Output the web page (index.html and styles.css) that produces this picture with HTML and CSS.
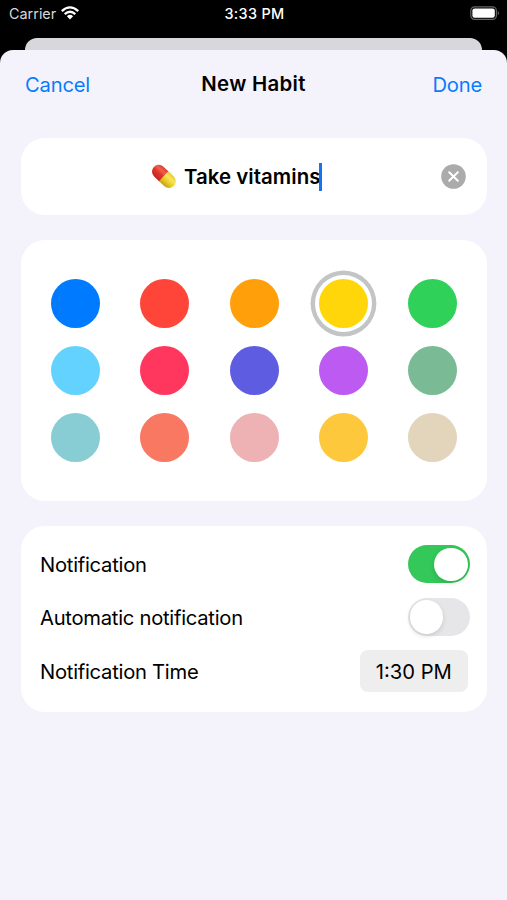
FILE: index.html
```html
<!DOCTYPE html>
<html lang="en">
<head>
<meta charset="utf-8">
<title>New Habit</title>
<link rel="stylesheet" href="styles.css">
</head>
<body>
<div class="status">
  <div class="carrier"><span class="carrier-name">Carrier</span>
    <svg class="wifi" viewBox="0 0 18 14" width="18" height="14"><g fill="none" stroke="#fff" stroke-width="2.3"><path d="M.8 5.2Q9-2.4 17.2 5.2"/><path d="M3.7 8.2Q9 3.2 14.3 8.2"/></g><path fill="#fff" d="M5.9 10.2Q9 7.4 12.1 10.2L9 13.4Z"/></svg>
  </div>
  <div class="clock">3:33 PM</div>
  <svg class="battery" viewBox="0 0 30 15" width="30" height="15"><rect x=".8" y=".8" width="25.6" height="12.6" rx="3.8" fill="none" stroke="#666" stroke-width="1.2"/><rect x="2.4" y="2.4" width="22.4" height="9.4" rx="2.2" fill="#fff"/><path d="M27.8 4.8Q30 7.1 27.8 9.4Z" fill="#777"/></svg>
</div>
<div class="backsheet"></div>
<main class="sheet">
  <header class="nav">
    <span class="action cancel">Cancel</span>
    <h1 class="title">New Habit</h1>
    <span class="action done">Done</span>
  </header>
  <section class="card name-card">
    <svg class="pill" viewBox="0 0 26 26" width="26" height="26">
      <defs>
        <linearGradient id="red" x1="0" y1="0" x2="0" y2="1"><stop offset="0" stop-color="#d8402f"/><stop offset=".3" stop-color="#f0604e"/><stop offset=".55" stop-color="#e0392b"/><stop offset="1" stop-color="#c2251d"/></linearGradient>
        <linearGradient id="yellow" x1="0" y1="0" x2="0" y2="1"><stop offset="0" stop-color="#e9c92f"/><stop offset=".3" stop-color="#f8e660"/><stop offset=".6" stop-color="#ecd029"/><stop offset="1" stop-color="#c8a01c"/></linearGradient>
      </defs>
      <g transform="rotate(43 12.9 12.4)"><path fill="url(#red)" d="M13 5.6H5.9a6.8 6.8 0 0 0 0 13.6H13Z"/><path fill="url(#yellow)" d="M12.6 5.6h7.3a6.8 6.8 0 0 1 0 13.6h-7.3Z"/></g>
    </svg>
    <span class="habit">Take vitamins</span><span class="caret"></span>
    <svg class="clear" viewBox="0 0 25 25" width="25" height="25"><circle cx="12.5" cy="12.5" r="12.3" fill="#ababab"/><path d="M8.2 8.2l8.6 8.6M16.8 8.2l-8.6 8.6" stroke="#fff" stroke-width="2" stroke-linecap="round"/></svg>
  </section>
  <section class="card palette">
    <i class="swatch blue"></i><i class="swatch red"></i><i class="swatch orange"></i><i class="swatch yellow selected"></i><i class="swatch green"></i>
    <i class="swatch sky"></i><i class="swatch pink"></i><i class="swatch indigo"></i><i class="swatch purple"></i><i class="swatch sage"></i>
    <i class="swatch teal"></i><i class="swatch coral"></i><i class="swatch rose"></i><i class="swatch amber"></i><i class="swatch sand"></i>
  </section>
  <section class="card settings">
    <div class="row"><span class="label">Notification</span><span class="toggle on"><i class="knob"></i></span></div>
    <div class="row"><span class="label">Automatic notification</span><span class="toggle"><i class="knob"></i></span></div>
    <div class="row time-row"><span class="label">Notification Time</span><span class="time"><span class="time-text">1:30 PM</span></span></div>
  </section>
</main>
</body>
</html>
```
FILE: styles.css
```css
* { box-sizing: border-box; }
body { margin: 0; height: 900px; overflow: hidden; background: #000; font-family: Inter, "Liberation Sans", sans-serif; font-size: 20.2px; line-height: 26px; color: #000; white-space: nowrap; }
.status { height: 38px; padding: 5px 7px 0 9px; display: grid; grid-template-columns: 1fr auto 1fr; align-items: start; color: #fff; font-size: 14.4px; line-height: 18px; }
.carrier { display: flex; gap: 5px; color: #d8d8d8; }
.wifi { margin-top: 1px; }
.clock { font-weight: 500; letter-spacing: .35px; }
.battery { justify-self: end; margin-top: 1px; }
.backsheet { height: 12px; margin: 0 25px; background: #d8d7dc; border-radius: 12px 12px 0 0; }
.sheet { height: 850px; padding: 0 20px 0 21px; background: #f4f3fc; border-radius: 13px 13px 0 0; }
.nav { height: 88px; padding: 21px 5px 0 4px; display: grid; grid-template-columns: 1fr auto 1fr; align-items: start; }
.action { color: #087cff; padding-top: 1px; letter-spacing: -.2px; }
.done { text-align: right; }
.title { margin: 0; font-size: 20.4px; line-height: 26px; font-weight: 600; letter-spacing: .3px; }
.card { background: #fff; border-radius: 24px; }
.name-card { height: 77px; padding: 0 21px 0 130px; display: flex; align-items: center; }
.habit { font-size: 20.4px; font-weight: 600; margin-left: 7px; letter-spacing: .06px; padding-top: 1px; }
.caret { width: 3px; height: 28px; margin-left: -1px; background: #1673ec; }
.clear { margin-left: auto; }
.palette { margin-top: 25px; height: 261px; padding: 39px 30px 0; display: grid; grid-template-columns: repeat(5, 49px); grid-auto-rows: 49px; justify-content: space-between; align-content: start; row-gap: 18px; }
.swatch { border-radius: 50%; }
.selected { box-shadow: 0 0 0 4px #fff, 0 0 0 8.4px #c3c4c6; }
.blue { background: #007aff; } .red { background: #ff453a; } .orange { background: #ff9f0a; } .yellow { background: #ffd60a; } .green { background: #30d158; }
.sky { background: #64d2ff; } .pink { background: #ff375f; } .indigo { background: #5e5ce0; } .purple { background: #bc5af2; } .sage { background: #7abb96; }
.teal { background: #88ccd4; } .coral { background: #f87861; } .rose { background: #eeb2b5; } .amber { background: #fdc83b; } .sand { background: #e2d5bb; }
.settings { margin-top: 25px; height: 186px; padding: 12px 17px 0 19px; }
.row { height: 52.7px; display: flex; align-items: center; justify-content: space-between; }
.label { letter-spacing: -.26px; padding-top: 1px; }
.toggle { width: 62.5px; height: 38px; padding: 2.4px; display: flex; background: #e6e6e8; border-radius: 19px; }
.on { background: #34c759; justify-content: flex-end; }
.knob { width: 33.2px; height: 33.2px; border-radius: 50%; background: #fff; box-shadow: 0 2px 5px rgba(0,0,0,.13); }
.time-row { height: 56px; padding-right: 2px; }
.time { width: 108.5px; height: 42px; display: flex; align-items: center; justify-content: center; background: #eeeeef; border-radius: 8px; }
.time-text { padding-top: 1px; }
```
